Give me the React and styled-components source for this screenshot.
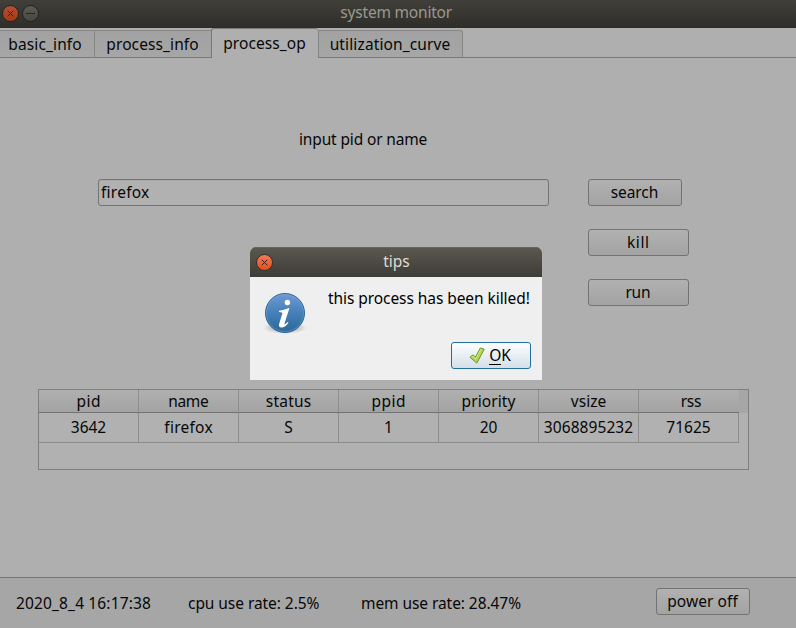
import React from "react";
import styled, { createGlobalStyle, css } from "styled-components";

const GlobalStyle = createGlobalStyle`
  *, *::before, *::after { box-sizing: border-box; }
  body { margin: 0; background: #afafaf; overflow: hidden; }
`;

const Window = styled.main`
  position: relative;
  display: flex;
  flex-direction: column;
  width: 796px;
  height: 628px;
  background: #afafaf;
  color: #070707;
  font: 15.5px/20px "Noto Sans", "Open Sans", sans-serif;
  white-space: nowrap;
`;

const Label = styled.span`
  letter-spacing: ${(p) => p.$track || 0}px;
  margin-right: ${(p) => -(p.$track || 0)}px;
`;

const TitleBar = styled.header`
  display: flex;
  align-items: center;
  gap: 3.5px;
  flex: none;
  height: 28px;
  padding: 0 2px 2px 1.5px;
  background: linear-gradient(#403f39, #2e2d29);
  color: #9b9890;
`;

const Title = styled.h1`
  flex: 1;
  margin: 0 44px 2px 0;
  text-align: center;
  font: inherit;
`;

const Round = styled.button`
  display: grid;
  place-items: center;
  flex: none;
  width: 17px;
  height: 17px;
  padding: 0;
  border: 1px solid ${(p) => p.$edge};
  border-radius: 50%;
  background: linear-gradient(${(p) => p.$from}, ${(p) => p.$to});
  svg { display: block; }
`;

const Tabs = styled.nav`
  display: flex;
  align-items: flex-end;
  flex: none;
  height: 30px;
  border-bottom: 1px solid #797979;
`;

const Tab = styled.button`
  width: ${(p) => p.$w}px;
  height: 27px;
  padding: ${(p) => (p.$bare ? "0 4px 0 0" : "0 1px 0 0")};
  border: 1px solid #868686;
  border-left-width: ${(p) => (p.$bare ? 0 : 1)}px;
  border-right-width: ${(p) => (p.$last ? 1 : 0)}px;
  border-bottom: 0;
  border-radius: 0 ${(p) => (p.$last ? 3 : 0)}px 0 0;
  background: linear-gradient(#a2a2a2, #a6a6a6);
  color: inherit;
  font: inherit;
  text-align: center;
  ${(p) => p.$active && css`
    height: 30px;
    margin-bottom: -1px;
    padding-bottom: 2px;
    border-color: #797979;
    border-radius: 3px 3px 0 0;
    background: #afafaf;
  `}
`;

const Content = styled.section`
  flex: none;
  height: 519px;
  padding: 71px 47px 0 38px;
`;

const Prompt = styled.label`
  display: block;
  height: 20px;
  margin: 0 0 30px 261px;
`;

const Form = styled.div`
  display: flex;
  align-items: flex-start;
  gap: 39px;
  height: 210px;
  padding-left: 60px;
`;

const Field = styled.div`
  width: 451px;
  height: 27px;
  padding: 2px 2px;
  border: 1px solid #747474;
  border-radius: 3px;
  background: #b1b1b1;
  box-shadow: inset 0 1px #a8a8a8;
`;

const Actions = styled.div`
  display: flex;
  flex-direction: column;
  gap: 23px;
`;

const Button = styled.button`
  display: flex;
  align-items: center;
  justify-content: center;
  width: ${(p) => p.$w}px;
  height: 27px;
  padding: 0 1px 1px 0;
  border: 1px solid #737373;
  border-radius: 3px;
  background: linear-gradient(#b1b1b1, #a3a3a3);
  color: inherit;
  font: inherit;
`;

const Table = styled.div`
  width: 711px;
  height: 81px;
  border: 1px solid #7f7f7f;
  background: #b1b1b1;
`;

const HeadRow = styled.div`
  display: flex;
  height: 23px;
  background: #a6a6a6;
`;

const Cell = styled.div`
  width: 100px;
  height: 30px;
  padding-top: 4px;
  border-right: 1px solid #8c8c8c;
  border-bottom: 1px solid #8c8c8c;
  text-align: center;
`;

const HeadCell = styled(Cell)`
  height: 23px;
  padding-top: 1px;
  border-right-color: #8e8e8e;
  border-bottom-color: #727272;
  background: linear-gradient(#b0b0b0, #a3a3a3);
  &:last-child {
    padding-left: 4px;
    border-right: 0;
  }
`;

const Row = styled.div`
  display: flex;
`;

const Footer = styled.footer`
  display: flex;
  flex: 1;
  border-top: 1px solid #747474;
  background: #a6a6a6;
  padding: 10px 46px 0 16px;
`;

const Stat = styled.div`
  width: ${(p) => p.$w}px;
  padding-top: 5px;
`;

const Dialog = styled.section`
  position: absolute;
  left: 250px;
  top: 247px;
  width: 292px;
  height: 133px;
  border-radius: 6px 6px 0 0;
  overflow: hidden;
  background: #efefef;
  color: #000;
`;

const DialogBar = styled.header`
  display: flex;
  align-items: center;
  height: 30px;
  padding: 0 5px 0 5.5px;
  background: linear-gradient(#5b584f, #3d3c37);
  box-shadow: inset 0 1px #68655b;
  color: #dfdbd2;
`;

const DialogTitle = styled.h2`
  flex: 1;
  margin: 0 16.5px 2px 0;
  font: inherit;
  text-align: center;
`;

const DialogBody = styled.div`
  display: grid;
  grid-template-columns: 64px 1fr;
  grid-template-rows: 54px 27px;
  row-gap: 0;
  padding: 11px 11px 0 14px;
  svg { display: block; }
`;

const OkButton = styled(Button)`
  grid-column: 2;
  justify-self: end;
  gap: 4px;
  padding: 0 2px 1px 0;
  border-color: #246e9e;
  background: linear-gradient(#fdfefe, #d5dfe8);
`;

const Mnemonic = styled.span`
  box-shadow: 0 1px #000;
  line-height: 18px;
  display: inline-block;
`;

const Cross = () => (
  <svg width="7" height="7" viewBox="0 0 7 7" stroke="#3b2018" strokeWidth="1">
    <path d="M.7.7 6.3 6.3M6.3.7.7 6.3" />
  </svg>
);

const InfoIcon = () => (
  <svg width="44" height="48" viewBox="0 0 44 48">
    <defs>
      <linearGradient id="ball" x2="0" y2="1">
        <stop stopColor="#7199d4" />
        <stop offset=".5" stopColor="#4580b8" />
        <stop offset="1" stopColor="#2c6797" />
      </linearGradient>
      <radialGradient id="shade">
        <stop stopColor="#000" stopOpacity=".4" />
        <stop offset="1" stopColor="#000" stopOpacity="0" />
      </radialGradient>
    </defs>
    <ellipse cx="21" cy="40" rx="22" ry="6" fill="url(#shade)" />
    <circle cx="21" cy="25" r="19.5" fill="url(#ball)" stroke="#2a659c" />
    <circle cx="21" cy="25" r="18.5" fill="none" stroke="#8eb4df" strokeOpacity=".35" />
    <circle cx="23.4" cy="14.5" r="2.7" fill="#fff" />
    <path d="M15 22.700c3.400-.4 6.500-1.300 9.800-2.600l.5.4-4.700 14.700c-.3 1.200.1 1.500.8.9l2.300-2.200.8.8c-2.200 3-4.300 4.700-7 4.700-2.300 0-3-1.500-2.400-3.500l3.300-10.300c.3-1-.4-1.400-3.400-1.700z" fill="#fff" />
  </svg>
);

const CheckIcon = () => (
  <svg width="16" height="17" viewBox="0 0 16 17">
    <path d="M.9 10.200 4 7.900l2.500 2.200L11.300.9l4 1.300-7.500 13.900z" fill="#b1d656" stroke="#6f9630" strokeLinejoin="round" />
    <path d="m2.700 10.200 1.200-.8 2.900 2.500 5.100-9.700" fill="none" stroke="#d4eb93" strokeWidth=".8" />
  </svg>
);

const columns = [
  ["pid", 0.45, "3642", 0],
  ["name", -0.3, "firefox", 0.25],
  ["status", 0.2, "S", 0],
  ["ppid", 0.45, "1", 0],
  ["priority", 0.08, "20", 0],
  ["vsize", 0, "3068895232", 0.08],
  ["rss", -0.3, "71625", 0],
];

export default function App() {
  return (
    <>
      <GlobalStyle />
      <Window>
        <TitleBar>
          <Round $edge="#26231f" $from="#b35031" $to="#a63b15" aria-label="close"><Cross /></Round>
          <Round $edge="#22211f" $from="#5b5b55" $to="#484843" aria-label="minimize">
            <svg width="9" height="1" viewBox="0 0 9 1"><path d="M0 .5h9" stroke="#252521" /></svg>
          </Round>
          <Title><Label $track={-0.2}>system monitor</Label></Title>
        </TitleBar>
        <Tabs>
          <Tab $w={94} $bare><Label $track={0.12}>basic_info</Label></Tab>
          <Tab $w={117}><Label $track={0.11}>process_info</Label></Tab>
          <Tab $w={107} $active><Label $track={0.08}>process_op</Label></Tab>
          <Tab $w={145} $last><Label $track={0.13}>utilization_curve</Label></Tab>
        </Tabs>
        <Content>
          <Prompt><Label $track={-0.15}>input pid or name</Label></Prompt>
          <Form>
            <Field><Label $track={0.25}>firefox</Label></Field>
            <Actions>
              <Button $w={94}><Label $track={-0.08}>search</Label></Button>
              <Button $w={101}><Label $track={0.55}>kill</Label></Button>
              <Button $w={101}><Label $track={-0.3}>run</Label></Button>
            </Actions>
          </Form>
          <Table>
            <HeadRow>
              {columns.map(([name, track]) => (
                <HeadCell key={name}><Label $track={track}>{name}</Label></HeadCell>
              ))}
            </HeadRow>
            <Row>
              {columns.map(([name, , value, track]) => (
                <Cell key={name}><Label $track={track}>{value}</Label></Cell>
              ))}
            </Row>
          </Table>
        </Content>
        <Footer>
          <Stat $w={172}><Label $track={0.15}>2020_8_4 16:17:38</Label></Stat>
          <Stat $w={173}><Label $track={-0.06}>cpu use rate: 2.5%</Label></Stat>
          <Stat $w={295}><Label $track={-0.07}>mem use rate: 28.47%</Label></Stat>
          <Button $w={94}><Label $track={0.08}>power off</Label></Button>
        </Footer>
        <Dialog>
          <DialogBar>
            <Round $edge="#35302a" $from="#f3795a" $to="#e2501e" aria-label="close"><Cross /></Round>
            <DialogTitle><Label $track={-0.05}>tips</Label></DialogTitle>
          </DialogBar>
          <DialogBody>
            <InfoIcon />
            <Label $track={-0.07}>this process has been killed!</Label>
            <OkButton $w={80}>
              <CheckIcon />
              <Label $track={-0.1}><Mnemonic>O</Mnemonic>K</Label>
            </OkButton>
          </DialogBody>
        </Dialog>
      </Window>
    </>
  );
}
